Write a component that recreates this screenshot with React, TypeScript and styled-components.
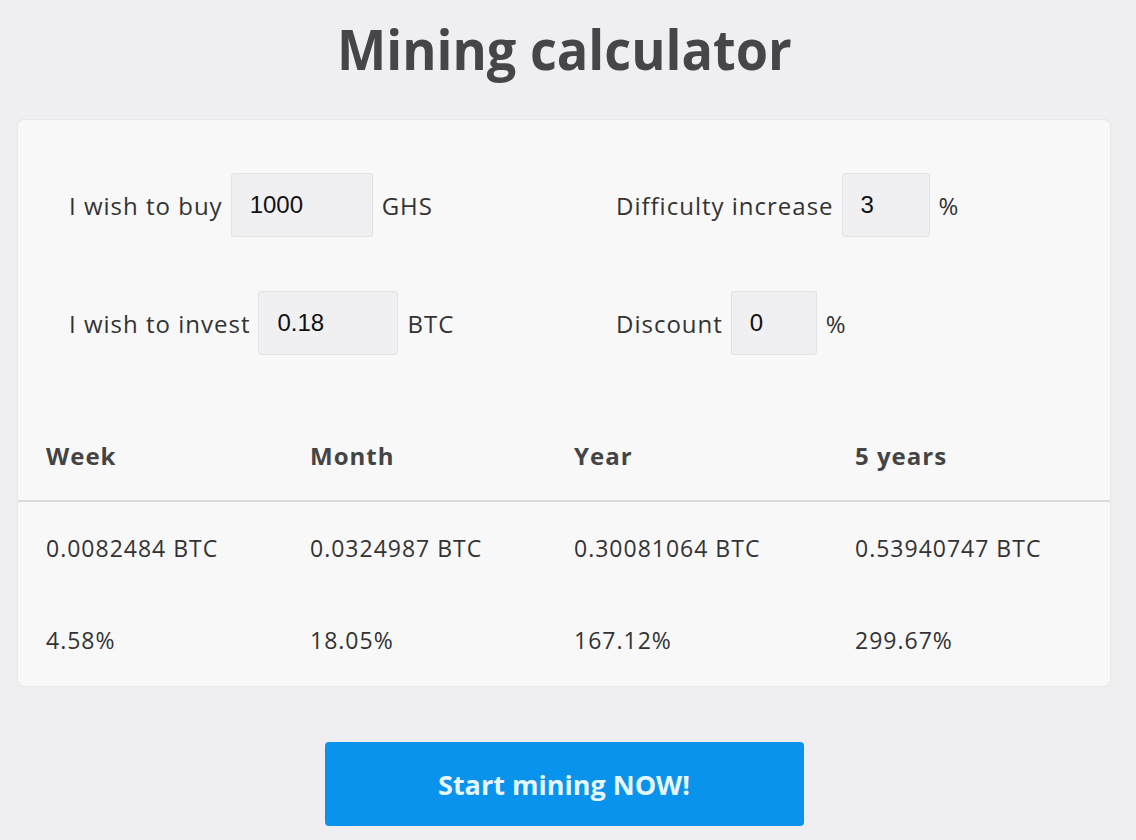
import React from "react";
import styled, { createGlobalStyle } from "styled-components";

const Global = createGlobalStyle`
  html, body { margin: 0; padding: 0; background: #efeef0; }
  body { font-family: "Open Sans", "Noto Sans", sans-serif; color: #333; }
  * { box-sizing: border-box; }
`;

const Page = styled.div`
  width: 1136px;
  height: 840px;
  padding: 0 26px 0 18px;
  display: flex;
  flex-direction: column;
  align-items: center;
`;

const Title = styled.h1`
  margin: 0;
  height: 120px;
  padding-top: 14px;
  font-family: "Open Sans", sans-serif;
  font-weight: 700;
  font-size: 55px;
  line-height: 70px;
  color: #464547;
  transform: scaleX(0.95);
`;

const Card = styled.div`
  width: 1092px;
  background: #f8f8f9;
  border-radius: 6px;
  box-shadow: 0 0 2px rgba(0, 0, 0, 0.12);
`;

const Form = styled.div`
  display: grid;
  grid-template-columns: 547px 1fr;
  grid-template-rows: 64px 64px;
  row-gap: 54px;
  padding: 53px 0 0 51px;
  height: 290px;
`;

const Field = styled.div`
  display: flex;
  align-items: center;
  gap: 8px;
  height: 64px;
`;

const Label = styled.span`
  font-size: 24px;
  letter-spacing: 1px;
  color: #333;
`;

const Input = styled.input<{ $w: number }>`
  width: ${(p) => p.$w}px;
  height: 64px;
  border: 1px solid #e3e2e5;
  border-radius: 3px;
  background: #f0eff1;
  padding: 0 18px;
  font-family: "Liberation Sans", Arial, sans-serif;
  font-size: 24px;
  color: #111;
  outline: none;
`;

const Unit = styled.span`
  font-size: 24px;
  letter-spacing: 1px;
  color: #333;
  margin-left: 1px;
`;

const Row = styled.div<{ $head?: boolean }>`
  display: grid;
  grid-template-columns: 264px 264px 281px 1fr;
  padding-left: 28px;
  height: 92px;
  align-items: center;
  border-bottom: ${(p) => (p.$head ? "2px solid #dcdcde" : "none")};
`;

const Head = styled.span`
  font-size: 24px;
  font-weight: 700;
  letter-spacing: 1px;
  color: #444;
`;

const Cell = styled.span`
  font-size: 23px;
  letter-spacing: 1px;
  color: #333;
`;

const Button = styled.button`
  margin-top: 56px;
  width: 479px;
  height: 84px;
  border: none;
  border-radius: 4px;
  background: #0a93ec;
  color: #e6f6ff;
  font-family: "Open Sans", sans-serif;
  font-weight: 700;
  font-size: 27px;
  cursor: pointer;
`;

const fields = [
  { label: "I wish to buy", value: "1000", unit: "GHS", w: 142 },
  { label: "Difficulty increase", value: "3", unit: "%", w: 88 },
  { label: "I wish to invest", value: "0.18", unit: "BTC", w: 140 },
  { label: "Discount", value: "0", unit: "%", w: 86 },
];

const heads = ["Week", "Month", "Year", "5 years"];
const rows = [
  ["0.0082484 BTC", "0.0324987 BTC", "0.30081064 BTC", "0.53940747 BTC"],
  ["4.58%", "18.05%", "167.12%", "299.67%"],
];

export default function App() {
  return (
    <>
      <Global />
      <Page>
        <Title>Mining calculator</Title>
        <Card>
          <Form>
            {fields.map((f) => (
              <Field key={f.label}>
                <Label>{f.label}</Label>
                <Input $w={f.w} defaultValue={f.value} />
                <Unit>{f.unit}</Unit>
              </Field>
            ))}
          </Form>
          <Row $head>
            {heads.map((h) => (
              <Head key={h}>{h}</Head>
            ))}
          </Row>
          {rows.map((r, i) => (
            <Row key={i}>
              {r.map((c) => (
                <Cell key={c}>{c}</Cell>
              ))}
            </Row>
          ))}
        </Card>
        <Button>Start mining NOW!</Button>
      </Page>
    </>
  );
}
